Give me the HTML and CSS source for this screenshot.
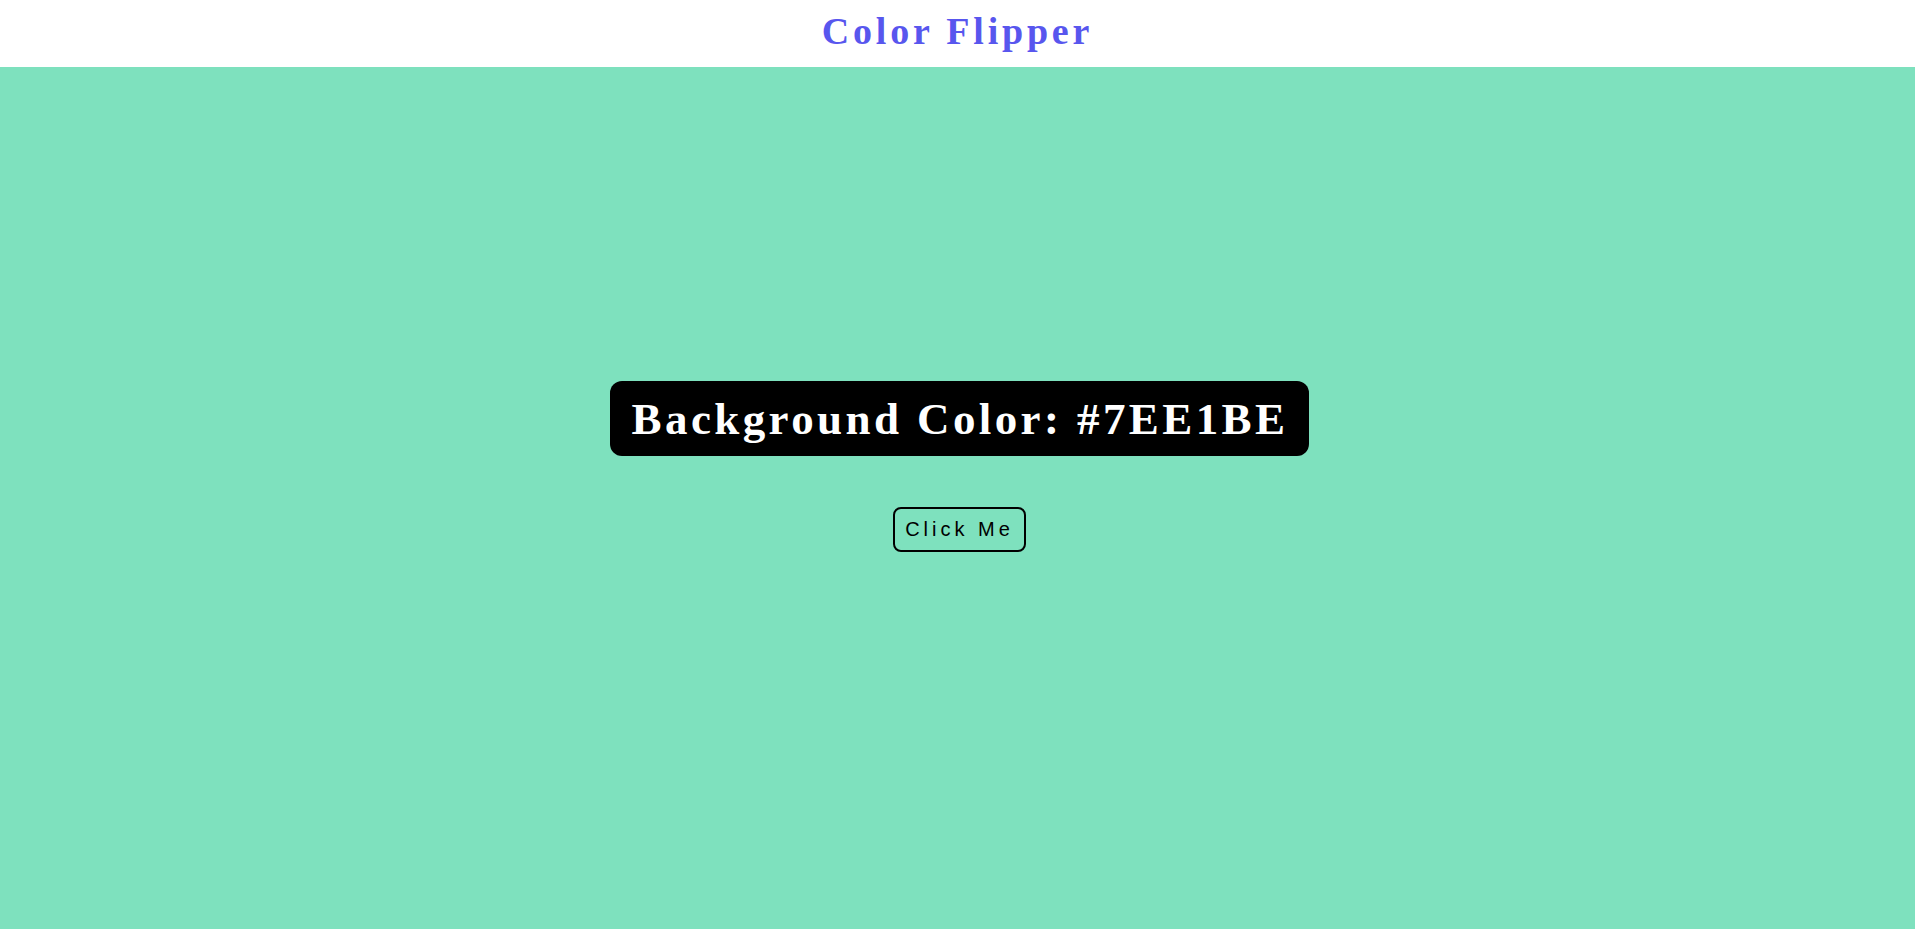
FILE: index.html
```html
<!DOCTYPE html>
<html lang="en">
<head>
<meta charset="utf-8">
<title>Color Flipper</title>
<link rel="stylesheet" href="styles.css">
</head>
<body>
<header class="topbar">
  <h1 class="title">Color Flipper</h1>
</header>
<main class="stage">
  <h2 class="color-label">Background Color: #7EE1BE</h2>
  <button class="flip-btn" type="button">Click Me</button>
</main>
</body>
</html>
```

FILE: styles.css
```css
* { box-sizing: border-box; }
html, body { margin: 0; padding: 0; height: 100%; }
body {
  display: flex;
  flex-direction: column;
  font-family: "Liberation Serif", "Times New Roman", serif;
}
.topbar {
  height: 67px;
  padding-bottom: 6px;
  background: #ffffff;
  display: flex;
  align-items: center;
  justify-content: center;
}
.title {
  margin: 0;
  font-size: 38px;
  font-weight: bold;
  letter-spacing: 3.8px;
  color: #5856ee;
}
.stage {
  flex: 1;
  background: #7ee1be;
  display: flex;
  flex-direction: column;
  align-items: center;
  padding-top: 314px;
  padding-left: 4px;
}
.color-label {
  margin: 0;
  background: #000;
  color: #fff;
  font-size: 45px;
  font-weight: bold;
  letter-spacing: 3.4px;
  padding: 12.5px 21px 12.5px 22px;
  border-radius: 12px;
  line-height: 50px;
}
.flip-btn {
  margin-top: 51px;
  background: transparent;
  border: 2px solid #000;
  border-radius: 8px;
  font-family: "Liberation Sans", Arial, sans-serif;
  font-size: 20px;
  line-height: 23px;
  letter-spacing: 4px;
  color: #000;
  padding: 9px 10px;
  cursor: pointer;
}
```
